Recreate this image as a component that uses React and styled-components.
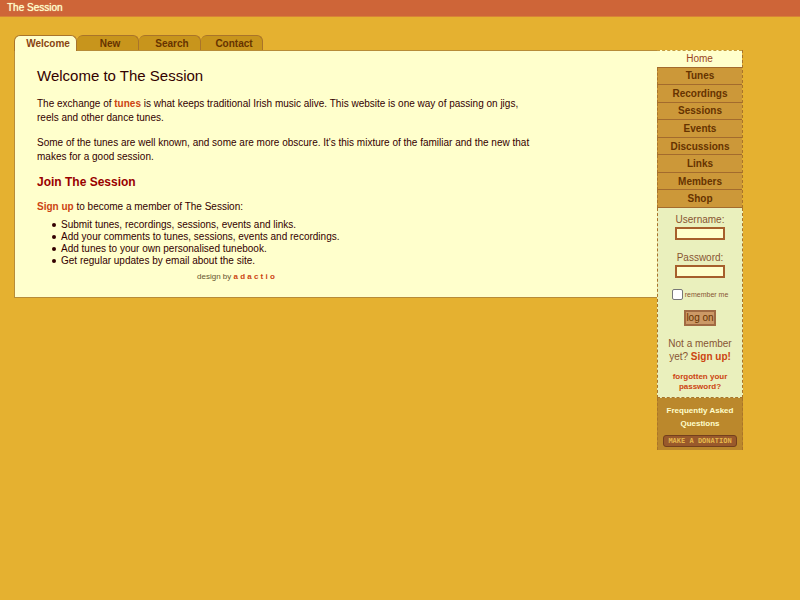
import React from 'react';
import styled, { createGlobalStyle, css } from 'styled-components';

const GlobalStyle = createGlobalStyle`
  * { box-sizing: border-box; }
  body {
    margin: 0;
    background: #e5b130;
    color: #330000;
    font: 10px/14px "Liberation Sans", Arial, sans-serif;
  }
`;

const Masthead = styled.header`
  height: 17px;
  padding: 0 7px;
  background: #ce6538;
  border-bottom: 1px solid #d88236;
  color: #ffffcc;
  line-height: 16px;
  text-shadow: 0 0 1px #ffffcc;
`;

const Page = styled.div`
  margin: 18px 57px 0 14px;
`;

const Tabs = styled.nav`
  display: flex;
  height: 15px;
`;

const Tab = styled.a`
  width: 62px;
  height: 15px;
  padding-left: 5px;
  border: 1px solid #a9742a;
  border-left-width: ${(p) => (p.$active ? '1px' : '0')};
  border-bottom: 0;
  border-radius: 6px 6px 0 0;
  background: #c8951c;
  color: #663300;
  font-weight: bold;
  line-height: 15px;
  text-align: center;
  text-decoration: none;
  ${(p) => p.$active && css`
    width: 63px;
    height: 16px;
    position: relative;
    background: #ffffcc;
    color: #884411;
  `}
`;

const Columns = styled.div`
  display: flex;
  align-items: flex-start;
`;

const Content = styled.main`
  flex: 1;
  min-width: 0;
  padding: 16px 22px 14px;
  border: 1px solid #b78c38;
  border-right: 0;
  background: #ffffcc;
`;

const Article = styled.div`
  max-width: 500px;
`;

const Title = styled.h1`
  margin: 0 0 12px;
  font-size: 15px;
  font-weight: normal;
  line-height: 18px;
`;

const Heading = styled.h2`
  margin: 0 0 11px;
  color: #990000;
  font-size: 12px;
  line-height: 14px;
`;

const Paragraph = styled.p`
  margin: 0 0 ${(p) => p.$gap || 11}px;
`;

const TextLink = styled.a`
  color: #cc4411;
  font-weight: bold;
  text-decoration: none;
`;

const List = styled.ul`
  margin: 0 0 4px;
  padding-left: 15px;
  line-height: 12px;
  list-style: none;
`;

const ListItem = styled.li`
  display: flex;
  align-items: center;
  gap: 5px;
  &::before {
    content: '';
    width: 4px;
    height: 4px;
    border-radius: 50%;
    background: #330000;
  }
`;

const Credit = styled.p`
  margin: 0 0 0 160px;
  color: #66552f;
  font-size: 8px;
  line-height: 12px;
`;

const Sidebar = styled.aside`
  width: 86px;
  text-align: center;
`;

const Menu = styled.nav`
  display: grid;
  grid-auto-rows: 1fr;
  height: 158px;
  border-right: 1px dashed #a9742a;
`;

const MenuItem = styled.a`
  display: flex;
  align-items: center;
  justify-content: center;
  padding-top: 1px;
  border-bottom: 1px solid #a36b2d;
  border-left: 1px dashed #a9742a;
  background: #cc9839;
  color: #663300;
  font-weight: bold;
  text-decoration: none;
  ${(p) => p.$active && css`
    border-top: 1px dashed #c49a3b;
    border-left: 0;
    background: #ffffcc;
    color: #994422;
    font-weight: normal;
  `}
`;

const Login = styled.form`
  display: flex;
  flex-direction: column;
  align-items: center;
  padding: 5px 0;
  border: 1px dashed #a9742a;
  border-top: 0;
  background: #eaf0bd;
  color: #885533;
`;

const Field = styled.label`
  display: flex;
  flex-direction: column;
  align-items: center;
  margin-bottom: 11px;
  line-height: 14px;
`;

const TextInput = styled.input`
  width: 50px;
  height: 13px;
  padding: 0 2px;
  border: 2px solid #a65f2c;
  border-radius: 0;
  background: #ffffcc;
  font: inherit;
`;

const Remember = styled.label`
  display: flex;
  align-items: center;
  gap: 2px;
  font-size: 7px;
  line-height: 10px;
`;

const Checkbox = styled.input`
  appearance: none;
  width: 11px;
  height: 11px;
  margin: 0;
  border: 1px solid #777;
  border-radius: 2px;
  background: #fff;
`;

const LogOn = styled.button`
  height: 16px;
  margin: 10px 0 11px;
  padding: 0;
  border: 2px solid #a16b43;
  background: #cc9966;
  color: #663300;
  font: inherit;
  line-height: 12px;
`;

const Note = styled.p`
  margin: 0 0 9px;
  line-height: 13px;
`;

const Forgotten = styled(TextLink)`
  width: 60px;
  font-size: 8px;
  line-height: 10px;
`;

const Extras = styled.div`
  padding: 6px 5px 3px;
  border: 1px dashed #a9742a;
  border-width: 0 1px;
  background: #bb882c;
`;

const Faq = styled.a`
  display: block;
  color: #ffffcc;
  font-size: 8px;
  font-weight: bold;
  line-height: 13px;
  text-decoration: none;
`;

const Donate = styled.button`
  display: flex;
  align-items: center;
  justify-content: center;
  width: 100%;
  height: 12px;
  margin-top: 5px;
  padding: 0;
  border: 1px solid #74401d;
  border-radius: 3px;
  background: #99592b;
  color: #e5b84d;
  font: bold 7px/10px "DejaVu Sans Mono", monospace;
  white-space: nowrap;
`;

const sections = ['Tunes', 'Recordings', 'Sessions', 'Events', 'Discussions', 'Links', 'Members', 'Shop'];

export default function App() {
  return (
    <>
      <GlobalStyle />
      <Masthead>The Session</Masthead>
      <Page>
        <Tabs>
          <Tab href="#welcome" $active>Welcome</Tab>
          <Tab href="#new">New</Tab>
          <Tab href="#search">Search</Tab>
          <Tab href="#contact">Contact</Tab>
        </Tabs>
        <Columns>
          <Content>
            <Article>
              <Title>Welcome to The Session</Title>
              <Paragraph>
                The exchange of <TextLink href="#tunes">tunes</TextLink> is what keeps traditional Irish music alive. This website is one way of passing on jigs, reels and other dance tunes.
              </Paragraph>
              <Paragraph>
                Some of the tunes are well known, and some are more obscure. It's this mixture of the familiar and the new that makes for a good session.
              </Paragraph>
              <Heading>Join The Session</Heading>
              <Paragraph $gap={5}>
                <TextLink href="#signup">Sign up</TextLink> to become a member of The Session:
              </Paragraph>
              <List>
                <ListItem>Submit tunes, recordings, sessions, events and links.</ListItem>
                <ListItem>Add your comments to tunes, sessions, events and recordings.</ListItem>
                <ListItem>Add tunes to your own personalised tunebook.</ListItem>
                <ListItem>Get regular updates by email about the site.</ListItem>
              </List>
              <Credit>design by <TextLink href="#adactio">a d a c t i o</TextLink></Credit>
            </Article>
          </Content>
          <Sidebar>
            <Menu>
              <MenuItem href="#home" $active>Home</MenuItem>
              {sections.map((name) => (
                <MenuItem key={name} href={`#${name.toLowerCase()}`}>{name}</MenuItem>
              ))}
            </Menu>
            <Login>
              <Field>Username:<TextInput type="text" name="username" /></Field>
              <Field>Password:<TextInput type="password" name="password" /></Field>
              <Remember><Checkbox type="checkbox" name="remember" />remember me</Remember>
              <LogOn type="button">log on</LogOn>
              <Note>Not a member<br />yet? <TextLink href="#signup">Sign up!</TextLink></Note>
              <Forgotten href="#password">forgotten your password?</Forgotten>
            </Login>
            <Extras>
              <Faq href="#faq">Frequently Asked Questions</Faq>
              <Donate type="button">MAKE A DONATION</Donate>
            </Extras>
          </Sidebar>
        </Columns>
      </Page>
    </>
  );
}
